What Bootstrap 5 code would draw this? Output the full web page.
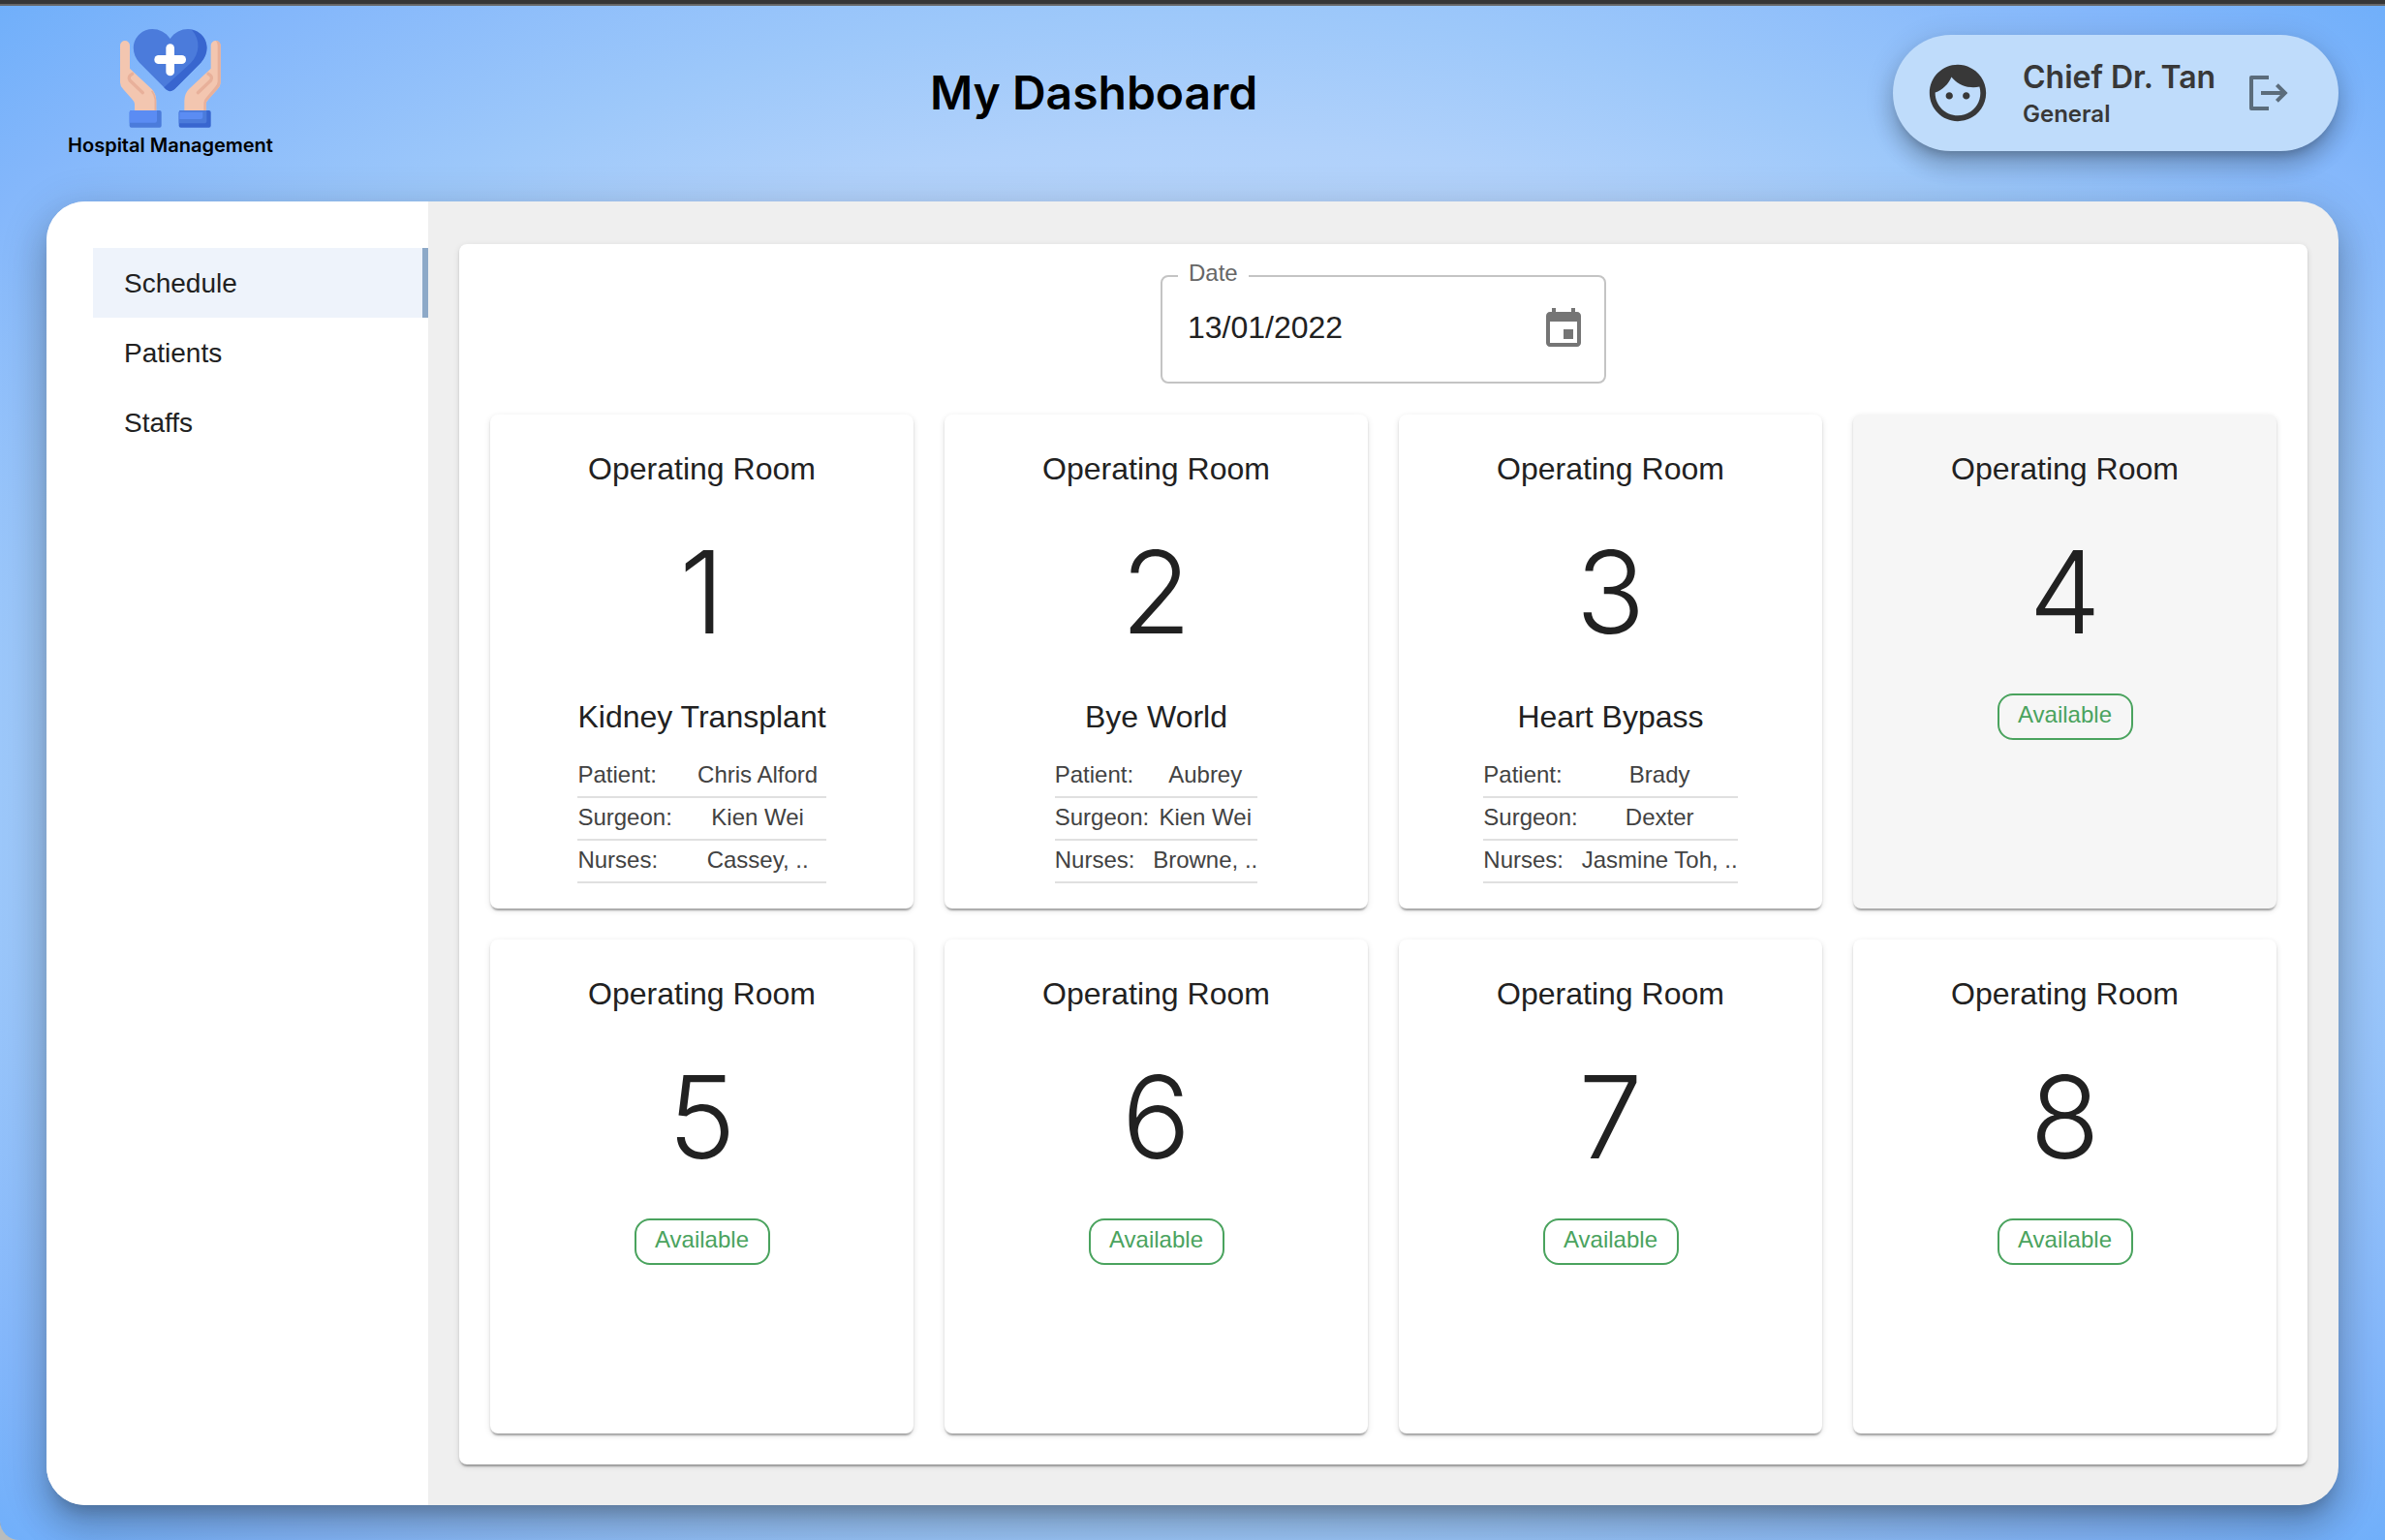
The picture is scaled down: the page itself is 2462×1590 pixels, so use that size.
<!DOCTYPE html>
<html lang="en">
<head>
<meta charset="utf-8">
<meta name="viewport" content="width=device-width, initial-scale=1">
<title>My Dashboard</title>
<link href="https://cdn.jsdelivr.net/npm/bootstrap@5.3.0/dist/css/bootstrap.min.css" rel="stylesheet">
<style>
  body { font-family: "Liberation Sans", Arial, sans-serif; color: #212121; background: #b9bcbc; }
  .page-shell {
    min-height: 100vh;
    padding: 0 48px 36px;
    border-top: 4px solid #363636;
    border-bottom-left-radius: 20px;
    background: radial-gradient(ellipse farthest-corner at center, #e0edfd 0%, #b0d1fb 58%, #9dc8fa 70%, #84b7fb 88%, #70affa 100%);
    box-shadow: inset 0 2px 0 #666;
  }
  .brand-font { font-family: Inter, "Open Sans", sans-serif; font-weight: 600; }
  .top-header { min-height: 204px; padding-bottom: 20px; }
  .logo-block { width: 256px; gap: 4px; color: #000; }
  .logo-block svg { width: 104px; height: 104px; }
  .logo-name { font-size: 20px; line-height: 28px; }
  .page-title { font-size: 48px; line-height: 60px; color: #000; }
  .user-pill {
    width: 460px; height: 120px; padding: 0 48px 0 32px; border-radius: 60px;
    background: #bfdcfb; color: #383838;
    box-shadow: 0 10px 10px -6px rgba(0,0,0,.2), 0 16px 20px 2px rgba(0,0,0,.14), 0 6px 28px 4px rgba(0,0,0,.12);
  }
  .face-icon { width: 70px; height: 70px; }
  .user-text { margin-left: 32px; padding-top: 4px; }
  .user-name { font-size: 32px; line-height: 40px; }
  .user-dept { font-size: 24px; line-height: 36px; }
  .icon-btn { color: #5b6c7b; line-height: 0; }
  .icon-btn svg { width: 48px; height: 48px; }
  .main-panel {
    border-radius: 40px; background: #efefef;
    box-shadow: 0 14px 16px -8px rgba(0,0,0,.2), 0 24px 34px 4px rgba(0,0,0,.14), 0 10px 44px 8px rgba(0,0,0,.12);
  }
  .side-nav { width: 394px; padding: 48px 0 48px 48px; background: #fff; }
  .side-nav .nav-link {
    padding: 2px 32px 0; font-size: 28px; line-height: 70px; color: #212121;
    border-right: 6px solid transparent; border-radius: 0;
  }
  .side-nav .nav-link.active { background: #eef3fb; border-right-color: #8da9c8; }
  .content-area { padding: 44px 32px 42px; min-width: 0; }
  .paper {
    border-radius: 8px; background: #fff;
    box-shadow: 0 4px 2px -2px rgba(0,0,0,.2), 0 2px 2px rgba(0,0,0,.14), 0 2px 6px rgba(0,0,0,.12);
  }
  .schedule { padding: 32px; }
  .date-field { width: 460px; height: 112px; padding: 0 18px 0 26px; border: 2px solid #c4c4c4; border-radius: 8px; }
  .date-field label { top: -18px; left: 16px; padding: 0 11px; background: #fff; font-size: 24px; line-height: 28px; color: #666; }
  .date-field input { border: 0; padding: 0; outline: 0; font-size: 32px; line-height: 48px; color: #212121; background: none; min-width: 0; margin-bottom: 4px; }
  .date-field .icon-btn { color: #757575; }
  .room-grid { --bs-gutter-x: 32px; --bs-gutter-y: 32px; margin-top: 0; }
  .room { min-height: 510px; padding: 32px 16px 26px; }
  .room.is-hovered { background: #f6f6f6; }
  .room-heading { font-size: 32px; line-height: 48px; }
  .room-number { font-family: Inter, Roboto, sans-serif; font-weight: 300; font-size: 118px; line-height: 144px; margin: 31px 0 33px; }
  .free-tag {
    min-width: 140px; padding: 6px 16px 10px; border: 2px solid #4aa35e; border-radius: 16px;
    font-size: 24px; line-height: 28px; color: #4aa35e;
  }
  .team-table { margin-top: 16px; min-width: 100%; font-size: 24px; line-height: 28px; color: #424242; white-space: nowrap; }
  .team-table th, .team-table td { padding: 6px 0 8px; border-bottom: 2px solid #e0e0e0; font-weight: 400; }
  .team-table th { padding-right: 4px; text-align: left; }
</style>
<script src="https://cdn.jsdelivr.net/npm/bootstrap@5.3.0/dist/js/bootstrap.bundle.min.js"></script>
</head>
<body>
<div class="page-shell d-flex flex-column">
  <header class="top-header brand-font d-flex justify-content-between align-items-center">
    <div class="logo-block d-flex flex-column align-items-center">
      <svg viewBox="376 84 312 312" aria-hidden="true">
        <path fill="#4b7bdb" d="M531 120C508 86 463 81 437 105C411 128 411 167 436 194L518 277Q531 288 544 277L626 194C651 167 651 128 625 105C599 81 554 86 531 120Z"/>
        <path fill="#3866cf" d="M598 92C626 125 623 165 594 196L512 271L518 277Q531 288 544 277L626 194C651 167 651 128 625 105Q613 95 598 92Z"/>
        <rect x="518" y="136" width="26" height="99" rx="13" fill="#fff"/>
        <rect x="482" y="171" width="98" height="27" rx="13" fill="#fff"/>
        <g id="hand">
          <path fill="#f3c6b0" d="M376 141a15 15 0 0 1 30 0V212L474 276Q488 290 488 312V342H421V322Q420 314 412 306L386 277Q376 267 376 256Z"/>
          <path fill="none" stroke="#e8b09a" stroke-width="10" stroke-linecap="round" stroke-linejoin="round" d="M414 229Q399 236 406 249L446 287"/>
        </g>
        <path fill="none" stroke="#e8b09a" stroke-width="5" d="M485 342V308Q484 294 474 281"/>
        <use href="#hand" transform="translate(1063 0) scale(-1 1)"/>
        <path fill="#e8b09a" d="M672 126Q687 128 687 141V256Q687 267 677 277L651 306Q642 314 642 322V342H635V318Q636 308 645 299L669 271Q678 262 678 252V141Q678 131 672 126Z"/>
        <rect x="405" y="342" width="99" height="53" rx="6" fill="#4b7bdb"/>
        <path fill="#5b8cf3" d="M411 342H490V374Q490 380 484 380H405V348Q405 342 411 342Z"/>
        <rect x="558" y="342" width="99" height="53" rx="6" fill="#3866cf"/>
        <path fill="#4b7bdb" d="M564 342H644V374Q644 382 636 382H558V348Q558 342 564 342Z"/>
        <path fill="#5b8cf3" d="M560 347H632V362Q632 369 625 369H560Z"/>
      </svg>
      <div class="logo-name">Hospital Management</div>
    </div>
    <h1 class="page-title brand-font m-0">My Dashboard</h1>
    <div class="user-pill d-flex align-items-center">
      <svg class="face-icon flex-shrink-0" viewBox="0 0 24 24" fill="currentColor" aria-hidden="true"><path d="M10.25 13c0 .69-.56 1.25-1.25 1.25S7.75 13.69 7.75 13s.56-1.25 1.25-1.25 1.25.56 1.25 1.25zM15 11.75c-.69 0-1.25.56-1.25 1.25s.56 1.25 1.25 1.25 1.25-.56 1.25-1.25-.56-1.25-1.25-1.25zm7 .25c0 5.52-4.48 10-10 10S2 17.52 2 12 6.48 2 12 2s10 4.48 10 10zm-2 0c0-.78-.12-1.53-.33-2.24-.7.15-1.42.24-2.17.24-3.13 0-5.92-1.44-7.76-3.69C8.69 8.87 6.6 10.88 4 11.86c.01.04 0 .09 0 .14 0 4.41 3.59 8 8 8s8-3.59 8-8z"/></svg>
      <div class="user-text flex-grow-1 text-nowrap">
        <div class="user-name">Chief Dr. Tan</div>
        <div class="user-dept">General</div>
      </div>
      <button type="button" class="icon-btn btn p-0 border-0" aria-label="Log out">
        <svg viewBox="0 0 24 24" fill="none" stroke="currentColor" stroke-width="2"><path d="M12 4H3V20H12" stroke-linejoin="round"/><path d="M8 12H20.5M16.2 7.8L20.4 12L16.2 16.2"/></svg>
      </button>
    </div>
  </header>

  <div class="main-panel d-flex flex-grow-1 overflow-hidden">
    <nav class="side-nav nav flex-column flex-shrink-0 flex-nowrap">
      <a class="nav-link active" href="#" aria-current="page">Schedule</a>
      <a class="nav-link" href="#">Patients</a>
      <a class="nav-link" href="#">Staffs</a>
    </nav>
    <main class="content-area flex-grow-1">
      <section class="paper schedule">
        <div class="date-field position-relative d-flex align-items-center mx-auto">
          <label class="position-absolute" for="date">Date</label>
          <input class="flex-grow-1" id="date" type="text" value="13/01/2022">
          <button type="button" class="icon-btn btn p-0 border-0" aria-label="Choose date">
            <svg viewBox="0 0 24 24" fill="currentColor"><path d="M17 12h-5v5h5v-5zM16 1v2H8V1H6v2H5c-1.11 0-1.99.9-1.99 2L3 19c0 1.1.89 2 2 2h14c1.1 0 2-.9 2-2V5c0-1.1-.9-2-2-2h-1V1h-2zm3 18H5V8h14v11z"/></svg>
          </button>
        </div>
        <div class="room-grid row row-cols-1 row-cols-md-2 row-cols-xl-4 text-center">
          <div class="col"><article class="paper room h-100 d-flex flex-column align-items-center">
            <div class="room-heading">Operating Room</div><div class="room-number">1</div>
            <div><div class="room-heading">Kidney Transplant</div>
              <table class="team-table">
                <tr><th scope="row">Patient:</th><td>Chris Alford</td></tr>
                <tr><th scope="row">Surgeon:</th><td>Kien Wei</td></tr>
                <tr><th scope="row">Nurses:</th><td>Cassey, ..</td></tr>
              </table></div>
          </article></div>
          <div class="col"><article class="paper room h-100 d-flex flex-column align-items-center">
            <div class="room-heading">Operating Room</div><div class="room-number">2</div>
            <div><div class="room-heading">Bye World</div>
              <table class="team-table">
                <tr><th scope="row">Patient:</th><td>Aubrey</td></tr>
                <tr><th scope="row">Surgeon:</th><td>Kien Wei</td></tr>
                <tr><th scope="row">Nurses:</th><td>Browne, ..</td></tr>
              </table></div>
          </article></div>
          <div class="col"><article class="paper room h-100 d-flex flex-column align-items-center">
            <div class="room-heading">Operating Room</div><div class="room-number">3</div>
            <div><div class="room-heading">Heart Bypass</div>
              <table class="team-table">
                <tr><th scope="row">Patient:</th><td>Brady</td></tr>
                <tr><th scope="row">Surgeon:</th><td>Dexter</td></tr>
                <tr><th scope="row">Nurses:</th><td>Jasmine Toh, ..</td></tr>
              </table></div>
          </article></div>
          <div class="col"><article class="paper room is-hovered h-100 d-flex flex-column align-items-center">
            <div class="room-heading">Operating Room</div><div class="room-number">4</div>
            <div class="free-tag">Available</div>
          </article></div>
          <div class="col"><article class="paper room h-100 d-flex flex-column align-items-center">
            <div class="room-heading">Operating Room</div><div class="room-number">5</div>
            <div class="free-tag">Available</div>
          </article></div>
          <div class="col"><article class="paper room h-100 d-flex flex-column align-items-center">
            <div class="room-heading">Operating Room</div><div class="room-number">6</div>
            <div class="free-tag">Available</div>
          </article></div>
          <div class="col"><article class="paper room h-100 d-flex flex-column align-items-center">
            <div class="room-heading">Operating Room</div><div class="room-number">7</div>
            <div class="free-tag">Available</div>
          </article></div>
          <div class="col"><article class="paper room h-100 d-flex flex-column align-items-center">
            <div class="room-heading">Operating Room</div><div class="room-number">8</div>
            <div class="free-tag">Available</div>
          </article></div>
        </div>
      </section>
    </main>
  </div>
</div>
</body>
</html>
